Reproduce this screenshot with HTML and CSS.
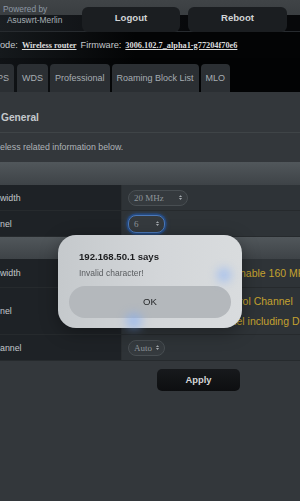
FILE: index.html
```html
<!DOCTYPE html>
<html>
<head>
    <title>Wireless - General</title>
    <link rel="stylesheet" href="styles.css">
</head>
<body>
    <div class="topbar">
        <div class="brand">
            <div class="powered">Powered by</div>
            <div class="merlin">Asuswrt-Merlin</div>
        </div>
        <div class="top-btn">Logout</div>
        <div class="top-btn">Reboot</div>
    </div>

    <div class="fwline">
        <span>ode:</span>
        <span class="fw-link">Wireless router</span>
        <span>Firmware:</span>
        <span class="fw-link">3006.102.7_alpha1-g77204f70e6</span>
    </div>

    <div class="tabs">
        <div class="tab tab-cut">PS</div>
        <div class="tab">WDS</div>
        <div class="tab">Professional</div>
        <div class="tab">Roaming Block List</div>
        <div class="tab">MLO</div>
    </div>

    <div class="panel">
        <div class="panel-title">General</div>
        <div class="panel-desc">eless related information below.</div>

        <div class="section-bar"></div>
        <div class="row">
            <div class="cell-label">width</div>
            <div class="cell-value">
                <span class="pill pill-wide">20 MHz
                    <svg class="arrows" viewBox="0 0 8 10"><path d="M1.5 4.2 L4 1.2 L6.5 4.2Z M1.5 5.8 L4 8.8 L6.5 5.8Z" fill="#a3a9ae"/></svg>
                </span>
            </div>
        </div>
        <div class="row">
            <div class="cell-label">nel</div>
            <div class="cell-value">
                <span class="pill pill-focus">6
                    <svg class="arrows" viewBox="0 0 8 10"><path d="M1.5 4.2 L4 1.2 L6.5 4.2Z M1.5 5.8 L4 8.8 L6.5 5.8Z" fill="#a3a9ae"/></svg>
                </span>
            </div>
        </div>

        <div class="section-bar section-bar-2"></div>
        <div class="row row-3">
            <div class="cell-label">width</div>
            <div class="cell-value">
                <span class="pill pill-long">20/40/80 MHz
                    <svg class="arrows" viewBox="0 0 8 10"><path d="M1.5 4.2 L4 1.2 L6.5 4.2Z M1.5 5.8 L4 8.8 L6.5 5.8Z" fill="#a3a9ae"/></svg>
                </span>
                <span class="note note-inline">Enable 160 MHz</span>
            </div>
        </div>
        <div class="row row-4">
            <div class="cell-label">nel</div>
            <div class="cell-value">
                <div class="note-block">
                    <div class="note note-first">Auto select Control Channel</div>
                    <div class="note note-second">Auto select channel including DFS channels</div>
                </div>
            </div>
        </div>
        <div class="row">
            <div class="cell-label">annel</div>
            <div class="cell-value">
                <span class="pill">Auto
                    <svg class="arrows" viewBox="0 0 8 10"><path d="M1.5 4.2 L4 1.2 L6.5 4.2Z M1.5 5.8 L4 8.8 L6.5 5.8Z" fill="#a3a9ae"/></svg>
                </span>
            </div>
        </div>

        <div class="apply-row">
            <div class="apply-btn">Apply</div>
        </div>
    </div>

    <!-- browser alert on top of the page -->
    <div class="dialog">
        <div class="dialog-title">192.168.50.1 says</div>
        <div class="dialog-text">Invalid character!</div>
        <div class="dialog-ok">OK</div>
    </div>
    <div class="glow glow-1"></div>
    <div class="glow glow-2"></div>
</body>
</html>
```

FILE: styles.css
```css
html, body {
    margin: 0;
    padding: 0;
}
body {
    width: 300px;
    height: 501px;
    overflow: hidden;
    background: #33373b;
    font-family: "Liberation Sans", Arial, sans-serif;
    color: #c8ccd0;
}

.topbar {
    display: flex;
    align-items: flex-start;
    height: 32px;
    border-bottom: 1px solid #272b2f;
    box-sizing: border-box;
    background:
        linear-gradient(#404447, #3a3e41 15px, transparent 15px),
        linear-gradient(to right, #1a1e22, #07080a 65%);
}
.brand {
    width: 82px;
    padding-top: 4px;
    font-size: 8.4px;
    line-height: 10px;
}
.powered {
    padding-left: 3px;
    color: #8d98a4;
}
.merlin {
    padding-left: 7px;
    margin-top: 1px;
    color: #a8afb5;
}
.top-btn {
    margin-top: 7px;
    width: 98px;
    height: 25px;
    line-height: 22px;
    border-radius: 6px;
    background: #1b1e21;
    color: #d2d4d6;
    font-size: 9.6px;
    font-weight: bold;
    text-align: center;
}
.top-btn + .top-btn {
    margin-left: 8px;
    width: 99px;
}

.fwline {
    display: flex;
    gap: 4px;
    height: 26px;
    align-items: center;
    background: linear-gradient(to right, #15191c, #030405 45%);
    font-size: 9.2px;
    color: #c4c8cc;
}
.fw-link {
    font-family: "Liberation Serif", "Times New Roman", serif;
    font-size: 8.3px;
    font-weight: bold;
    color: #dcdcdc;
    text-decoration: underline;
}

.tabs {
    display: flex;
    gap: 2px;
    padding-top: 6px;
    height: 28px;
    background: linear-gradient(to right, #101316, #020304 45%);
}
.tab {
    padding: 0 5px;
    line-height: 28px;
    background: #2b2f33;
    border-radius: 4px 4px 0 0;
    font-size: 9px;
    color: #a7adb2;
    white-space: nowrap;
}
.tab-cut {
    margin-left: -8px;
    margin-right: 1px;
}

.panel {
    background: #33373b;
}
.panel-title {
    padding: 19px 1px 8px;
    line-height: 13px;
    font-size: 10.2px;
    font-weight: bold;
    color: #c5c9cd;
    border-bottom: 1px solid #3f4447;
}
.panel-desc {
    padding: 9px 0 9px;
    line-height: 11px;
    font-size: 8.8px;
    color: #aeb3b7;
}

.section-bar {
    height: 23px;
    background: linear-gradient(#51575b, #3e4347);
}
.section-bar-2 {
    height: 22px;
}

.row {
    display: flex;
    height: 26px;
    border-bottom: 1px solid #262a2d;
    box-sizing: border-box;
}
.row-3 {
    height: 29px;
}
.row-4 {
    height: 47px;
}
.cell-label {
    width: 122px;
    flex-shrink: 0;
    display: flex;
    align-items: center;
    background: #1e2226;
    font-size: 8.8px;
    color: #c3c7cb;
    border-right: 1px solid #2a2e31;
    box-sizing: border-box;
}
.cell-value {
    flex: 1;
    display: flex;
    align-items: center;
    padding-left: 6px;
    background: #2e3337;
    white-space: nowrap;
    overflow: hidden;
}

.pill {
    display: inline-flex;
    flex-shrink: 0;
    align-items: center;
    justify-content: space-between;
    box-sizing: border-box;
    width: 37px;
    height: 16px;
    padding: 0 4px 0 5px;
    border: 1px solid #484e52;
    border-radius: 8px;
    background: #353a3e;
    font-family: "Liberation Serif", "Times New Roman", serif;
    font-size: 9px;
    color: #8e959a;
}
.pill-wide {
    width: 60px;
}
.pill-long {
    width: 90px;
}
.pill-focus {
    height: 18px;
    border-color: #4b78b8;
    box-shadow: 0 0 0 1.5px #254a80, 0 0 5px #2d5fa8;
}
.arrows {
    width: 5px;
    height: 7px;
}

.note {
    flex-shrink: 0;
    font-size: 10.5px;
    line-height: 20px;
    color: #c4a22f;
}
.note-inline {
    margin-left: 15px;
}
.note-first {
    padding-left: 34px;
}
.note-second {
    padding-left: 25px;
}

.apply-row {
    padding: 8px 0 0 157px;
    height: 133px;
}
.apply-btn {
    width: 83px;
    height: 22px;
    line-height: 22px;
    border-radius: 5px;
    background: linear-gradient(#17191c, #0d0e10);
    color: #d4d6d8;
    font-size: 9.4px;
    font-weight: bold;
    text-align: center;
}

.dialog {
    position: fixed;
    left: 58px;
    top: 235px;
    width: 184px;
    box-sizing: border-box;
    padding: 16px 10px 10px 11px;
    border-radius: 18px;
    background: linear-gradient(to right, #c5c9cc, #d3d6d9 55%, #d9dcde);
    box-shadow: 0 4px 18px rgba(0, 0, 0, 0.35);
}
.dialog-title {
    padding-left: 10px;
    line-height: 12px;
    font-size: 9.6px;
    font-weight: bold;
    color: #1c1d1f;
}
.dialog-text {
    padding-left: 10px;
    margin-top: 5px;
    line-height: 10px;
    font-size: 8.5px;
    color: #5a5d60;
}
.dialog-ok {
    margin-top: 8px;
    width: 162px;
    height: 32px;
    line-height: 32px;
    border-radius: 16px;
    background: #b4b8bc;
    text-align: center;
    font-size: 9.6px;
    color: #26282a;
}

.glow {
    position: fixed;
    border-radius: 50%;
    background: rgba(120, 170, 255, 0.5);
    filter: blur(5px);
}
.glow-1 {
    left: 217px;
    top: 268px;
    width: 14px;
    height: 14px;
}
.glow-2 {
    left: 126px;
    top: 313px;
    width: 16px;
    height: 16px;
}
```
